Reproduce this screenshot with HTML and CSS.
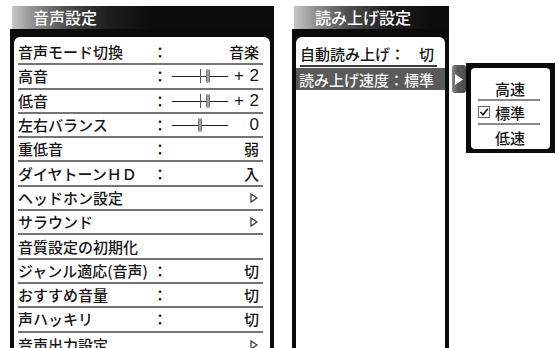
FILE: index.html
```html
<!DOCTYPE html>
<html lang="ja">
<head>
<meta charset="utf-8">
<title>音声設定</title>
<link rel="stylesheet" href="styles.css">
</head>
<body>
<div class="screen">
  <section class="panel panel-sound">
    <div class="panel-title">音声設定</div>
    <div class="panel-frame">
      <ul class="panel-body menu">
        <li class="row"><span class="label">音声モード切換</span><span class="colon">：</span><span class="value">音楽</span></li>
        <li class="row"><span class="label">高音</span><span class="colon">：</span><span class="value slider-value"><span class="slider"><i class="tick"></i><i class="knob" style="left:36px"></i></span><span class="num">+ 2</span></span></li>
        <li class="row"><span class="label">低音</span><span class="colon">：</span><span class="value slider-value"><span class="slider"><i class="tick"></i><i class="knob" style="left:36px"></i></span><span class="num">+ 2</span></span></li>
        <li class="row"><span class="label">左右バランス</span><span class="colon">：</span><span class="value slider-value"><span class="slider"><i class="knob" style="left:28px"></i></span><span class="num zero">0</span></span></li>
        <li class="row"><span class="label">重低音</span><span class="colon">：</span><span class="value">弱</span></li>
        <li class="row"><span class="label">ダイヤトーンＨＤ</span><span class="colon">：</span><span class="value">入</span></li>
        <li class="row"><span class="label">ヘッドホン設定</span><span class="colon"></span><span class="value"><svg class="tri" width="8" height="10" viewBox="0 0 8 10"><polygon points="1,1 7,5 1,9" /></svg></span></li>
        <li class="row"><span class="label">サラウンド</span><span class="colon"></span><span class="value"><svg class="tri" width="8" height="10" viewBox="0 0 8 10"><polygon points="1,1 7,5 1,9" /></svg></span></li>
        <li class="row"><span class="label">音質設定の初期化</span><span class="colon"></span><span class="value"></span></li>
        <li class="row"><span class="label">ジャンル適応(音声)</span><span class="colon">：</span><span class="value">切</span></li>
        <li class="row"><span class="label">おすすめ音量</span><span class="colon">：</span><span class="value">切</span></li>
        <li class="row"><span class="label">声ハッキリ</span><span class="colon">：</span><span class="value">切</span></li>
        <li class="row last"><span class="label">音声出力設定</span><span class="colon"></span><span class="value"><svg class="tri" width="8" height="10" viewBox="0 0 8 10"><polygon points="1,1 7,5 1,9" /></svg></span></li>
      </ul>
    </div>
  </section>

  <section class="panel panel-read">
    <div class="panel-title">読み上げ設定</div>
    <div class="panel-frame">
      <ul class="panel-body read-menu">
        <li class="read-row"><span>自動読み上げ：</span><span class="read-val">切</span></li>
        <li class="read-row selected"><span>読み上げ速度：標準</span></li>
      </ul>
    </div>
  </section>

  <div class="sub-arrow"><svg width="8" height="11" viewBox="0 0 8 11"><polygon points="0,0 8,5.5 0,11" fill="#fff"/></svg></div>

  <div class="popup">
    <ul class="popup-body">
      <li class="opt"><span class="check"></span><span>高速</span></li>
      <li class="opt"><span class="check"><svg width="12" height="12" viewBox="0 0 12 12"><rect x="0.5" y="0.5" width="11" height="11" fill="#fff" stroke="#6a6a6a"/><polyline points="2.5,6 5,8.8 9.8,2.8" fill="none" stroke="#111" stroke-width="1.6"/></svg></span><span>標準</span></li>
      <li class="opt"><span class="check"></span><span>低速</span></li>
    </ul>
  </div>
</div>
</body>
</html>
```

FILE: styles.css
```css
* {
  box-sizing: border-box;
  margin: 0;
  padding: 0;
}

html, body {
  width: 557px;
  height: 348px;
  overflow: hidden;
  background: #fff;
}

body {
  font-family: "Noto Sans CJK JP", "Noto Sans", sans-serif;
  color: #161616;
  font-weight: 500;
}

ul { list-style: none; }

.screen {
  position: relative;
  display: flex;
  gap: 18px;
  padding: 6px 0 0 10px;
  height: 348px;
}

.panel {
  display: flex;
  flex-direction: column;
}

.panel-sound { width: 264px; }
.panel-read { width: 157px; }

.panel-title {
  height: 23px;
  margin-left: 2px;
  padding-left: 21px;
  background: linear-gradient(90deg, #c6c6c6 0px, #8e8e8e 22px, #4c4c4c 55px, #1e1e1e 95px, #0c0c0c 140px);
  color: #fff;
  font-size: 16px;
  line-height: 23px;
  font-weight: 500;
}

.panel-frame {
  flex: 1;
  display: flex;
  background: #0b0b0b;
  padding: 8px 4px 0;
}

.panel-body {
  flex: 1;
  background: #fff;
  border-radius: 6px 6px 0 0;
  padding-top: 4px;
  overflow: hidden;
}

/* left menu */
.row {
  display: grid;
  grid-template-columns: 134px 16px 1fr;
  align-items: center;
  height: 24.3px;
  margin: 0 7px 0 4px;
  border-bottom: 2px solid #747474;
  font-size: 15px;
  line-height: 20px;
  white-space: nowrap;
}

.row.last { border-bottom: none; }

.colon { text-align: center; }

.value {
  display: flex;
  justify-content: flex-end;
  align-items: center;
  padding-right: 4px;
}

.slider-value { justify-content: flex-start; }

.slider {
  position: relative;
  width: 56px;
  height: 16px;
  margin-left: 4px;
}

.slider::before {
  content: "";
  position: absolute;
  left: 0;
  right: 0;
  top: 8px;
  height: 1px;
  background: #222;
}

.tick {
  position: absolute;
  left: 28px;
  top: 1px;
  width: 1px;
  height: 14px;
  background: #555;
}

.knob {
  position: absolute;
  top: 1px;
  width: 4px;
  height: 14px;
  margin-left: -2px;
  border-radius: 2px;
  background: linear-gradient(90deg, #5a5a5a, #b8b8b8 50%, #5a5a5a);
}

.num {
  margin-left: auto;
  font-family: "Liberation Sans", "Noto Sans", sans-serif;
  font-size: 17px;
  font-weight: 500;
  word-spacing: 1px;
}

.tri {
  display: block;
  margin-right: 1px;
}

.tri polygon {
  fill: #fff;
  stroke: #333;
  stroke-width: 1.2;
}

/* right menu */
.read-row {
  display: flex;
  align-items: center;
  font-size: 15px;
  white-space: nowrap;
}

.read-row:first-child {
  height: 26px;
  margin: 0 8px 0 4px;
  border-bottom: 2px solid #3c3c3c;
}

.read-val {
  margin-left: auto;
  padding-right: 3px;
}

.read-row.selected {
  height: 22px;
  margin-top: 1px;
  padding-left: 3px;
  background: #5a5a5a;
  color: #f4f4f4;
}

/* sub arrow and popup */
.sub-arrow {
  position: absolute;
  left: 452px;
  top: 65px;
  width: 14px;
  height: 28px;
  border-radius: 3px;
  background: linear-gradient(90deg, #8a8a8a, #5a5a5a 40%, #4a4a4a);
  display: flex;
  align-items: center;
  justify-content: center;
}

.popup {
  position: absolute;
  left: 466px;
  top: 63px;
  width: 89px;
  height: 90px;
  background: #0b0b0b;
  padding: 5px 5px 4px 5px;
}

.popup-body {
  height: 100%;
  background: #fff;
  border-radius: 4px;
  padding: 9px 10px 0 7px;
}

.opt {
  display: grid;
  grid-template-columns: 17px 1fr;
  align-items: center;
  height: 24px;
  border-bottom: 2px solid #8a8a8a;
  font-size: 15px;
}

.opt:last-child { border-bottom: none; }

.check svg { display: block; }
```
